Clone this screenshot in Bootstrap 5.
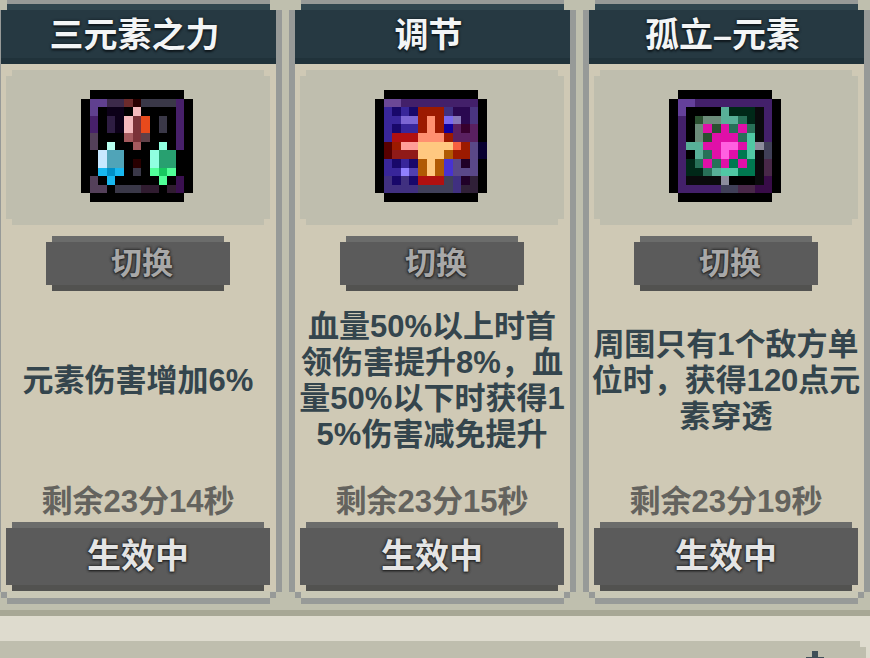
<!DOCTYPE html>
<html lang="zh-CN">
<head>
<meta charset="utf-8">
<meta name="viewport" content="width=device-width, initial-scale=1">
<title>元素</title>
<link href="https://cdn.jsdelivr.net/npm/bootstrap@5.3.0/dist/css/bootstrap.min.css" rel="stylesheet">
<style>
  :root { --notch: polygon(6px 0, calc(100% - 6px) 0, calc(100% - 6px) 6px, 100% 6px, 100% calc(100% - 6px), calc(100% - 6px) calc(100% - 6px), calc(100% - 6px) 100%, 6px 100%, 6px calc(100% - 6px), 0 calc(100% - 6px), 0 6px, 6px 6px); }
  body { background: #dedbce; color: #34454d; font-family: "Liberation Sans", "Noto Sans CJK SC", sans-serif; font-weight: 700; }
  .talents { background: #bfbfae; border-bottom: 6px solid #a7a795; padding-bottom: 6px; }
  .talent-grid { display: grid; grid-template-columns: repeat(3, minmax(0, 1fr)); gap: 7px; margin-left: -5px; }
  .talent { background: #979a98; padding: 4px 6px 6px;
    clip-path: polygon(12px 0, calc(100% - 12px) 0, calc(100% - 12px) 10px, 100% 10px, 100% calc(100% - 12px), calc(100% - 6px) calc(100% - 12px), calc(100% - 6px) calc(100% - 6px), calc(100% - 12px) calc(100% - 6px), calc(100% - 12px) 100%, 12px 100%, 12px calc(100% - 6px), 6px calc(100% - 6px), 6px calc(100% - 12px), 0 calc(100% - 12px), 0 10px, 12px 10px); }
  .talent-title { height: 60px; padding-right: 8px; font-size: 34px; line-height: 62px; color: #f3f5f6;
    background: linear-gradient(#31464f 6px, #263942 6px, #263942 54px, #20323a 54px);
    text-shadow: 0 0 3px #10191e, 0 2px 2px #10191e; }
  .talent-body { background: #cfc9b5; padding: 6px 6px 7px 5px; box-shadow: inset 0 -7px #c9c8b6;
    clip-path: polygon(0 0, 100% 0, 100% calc(100% - 6px), calc(100% - 6px) calc(100% - 6px), calc(100% - 6px) 100%, 6px 100%, 6px calc(100% - 6px), 0 calc(100% - 6px)); }
  .talent-art { height: 155px; padding: 0 2px 4px 0; background: #bfbeae; clip-path: var(--notch); }
  .talent-art svg { width: 112px; height: 112px; }
  .pixel-btn { border: 0; clip-path: var(--notch); font-weight: 700; text-shadow: 0 0 3px #252525, 0 0 3px #252525, 0 1px 2px #252525;
    background: linear-gradient(#6b6c6b 6px, #5b5b5b 6px, #5b5b5b calc(100% - 6px), #525250 calc(100% - 6px)); }
  .swap-btn { width: 184px; height: 55px; margin-top: 11px; padding: 0 0 0 8px; font-size: 31px; line-height: 55px; color: #a8a8a8; }
  .state-btn { height: 69px; padding: 0; margin-top: 2px; font-size: 34px; line-height: 69px; color: #e4e4e4; }
  .talent-text { height: 193px; padding-bottom: 14px; font-size: 31px; line-height: 36px; }
  .time-left { font-size: 31px; line-height: 36px; color: #64635e; }
  .next-panel { margin-top: 25px; margin-right: 4px; background: #bfbeae;
    clip-path: polygon(0 0, calc(100% - 6px) 0, calc(100% - 6px) 6px, 100% 6px, 100% 100%, 0 100%); }
  .next-panel svg { margin: 10px 42px 0 0; }
</style>
<script src="https://cdn.jsdelivr.net/npm/bootstrap@5.3.0/dist/js/bootstrap.bundle.min.js"></script>
</head>
<body class="d-flex flex-column min-vh-100 overflow-hidden">
<main class="talents">
  <div class="talent-grid">
    <article class="talent d-flex flex-column">
      <h2 class="talent-title text-center fw-bold mb-0">三元素之力</h2>
      <div class="talent-body d-flex flex-column flex-grow-1">
        <div class="talent-art d-flex align-items-center justify-content-center"><svg viewBox="0 0 13 13" data-icon="crystals" shape-rendering="crispEdges" aria-hidden="true"></svg></div>
        <button type="button" class="pixel-btn swap-btn align-self-center">切换</button>
        <p class="talent-text d-flex align-items-center justify-content-center text-center text-nowrap mb-0">元素伤害增加6%</p>
        <p class="time-left text-center text-nowrap mb-0">剩余23分14秒</p>
        <button type="button" class="pixel-btn state-btn w-100">生效中</button>
      </div>
    </article>
    <article class="talent d-flex flex-column">
      <h2 class="talent-title text-center fw-bold mb-0">调节</h2>
      <div class="talent-body d-flex flex-column flex-grow-1">
        <div class="talent-art d-flex align-items-center justify-content-center"><svg viewBox="0 0 13 13" data-icon="star" shape-rendering="crispEdges" aria-hidden="true"></svg></div>
        <button type="button" class="pixel-btn swap-btn align-self-center">切换</button>
        <p class="talent-text d-flex align-items-center justify-content-center text-center text-nowrap mb-0"><span>血量50%以上时首<br>领伤害提升8%，血<br>量50%以下时获得1<br>5%伤害减免提升</span></p>
        <p class="time-left text-center text-nowrap mb-0">剩余23分15秒</p>
        <button type="button" class="pixel-btn state-btn w-100">生效中</button>
      </div>
    </article>
    <article class="talent d-flex flex-column">
      <h2 class="talent-title text-center fw-bold mb-0">孤立–元素</h2>
      <div class="talent-body d-flex flex-column flex-grow-1">
        <div class="talent-art d-flex align-items-center justify-content-center"><svg viewBox="0 0 13 13" data-icon="target" shape-rendering="crispEdges" aria-hidden="true"></svg></div>
        <button type="button" class="pixel-btn swap-btn align-self-center">切换</button>
        <p class="talent-text d-flex align-items-center justify-content-center text-center text-nowrap mb-0"><span>周围只有1个敌方单<br>位时，获得120点元<br>素穿透</span></p>
        <p class="time-left text-center text-nowrap mb-0">剩余23分19秒</p>
        <button type="button" class="pixel-btn state-btn w-100">生效中</button>
      </div>
    </article>
  </div>
</main>
<section class="next-panel flex-grow-1 d-flex justify-content-end align-items-start overflow-hidden">
  <svg width="18" height="7" viewBox="0 0 18 7" shape-rendering="crispEdges" aria-hidden="true"><path fill="#3f4f58" d="M6 0h6v6h6v1H0V6h6z"/></svg>
</section>
<script>
  // Each icon is a 13 x 13 grid; "." is empty and "K" is black.
  const icons = {
    crystals: {
      colors: { P:'#60408f', p:'#3c2a4a', r:'#6b2b2b', d:'#280000', g:'#3a3848', U:'#47206a', e:'#0c0018', W:'#f4b9bc', m:'#7a3238', O:'#e84a1c', v:'#2e1d42', w:'#54405a', a:'#a55a5e', n:'#604048', c:'#b8fff0', M:'#90ffe0', L:'#c8e8ff', b:'#50a4b8', G:'#28a070', s:'#18b8f0', S:'#0090c8', N:'#50ff98', D:'#18c860', x:'#3a1050', y:'#301c30' },
      rows: ['.KKKKKKKKKKK.','KPPpprdggggUK','KPKeeKWKKKKUK','KUKveWmOKgKUK','KUKveWmOKgKUK','KwKKKamnKKKUK','KwKcKKaKKMKUK','KKLbbKKKMGGKK','KKLbbKdKMGGKK','KKsSsKgKNDNKK','KwKsKKKKKNKxK','KwwKgggyyKyxK','.KKKKKKKKKKK.']
    },
    star: {
      colors: { P:'#6b4896', U:'#43206a', B:'#38269a', n:'#18086a', R:'#9c1a00', v:'#4a3580', V:'#7c66d4', H:'#ff9070', l:'#7a68f0', q:'#8777b8', d:'#2a0850', b:'#10009a', m:'#5a2060', k:'#38002e', r:'#b01010', D:'#580000', W:'#ff9e98', Y:'#ffc880', O:'#f86040', z:'#080030', s:'#901a18', o:'#b05a04', L:'#4832d0', g:'#5a4888', x:'#200028', t:'#9080ff', u:'#5040b0', c:'#403080', y:'#40405a', e:'#302038' },
      rows: ['.KKKKKKKKKKK.','KPPUUUUUUUUUK','KBnBnRRRcddvK','KBBVVRHRlqdvK','KBnBBRHRbmkmK','KBrrrHHHRmmmK','KDRWWYYYYORgz','KDsssYYYoRRgz','KBnBnoYoLgxgK','KBBtuoYoLgggK','KcncnrrrycxeK','KccccyyyyceeK','.KKKKKKKKKKK.']
    },
    target: {
      colors: { P:'#64409a', U:'#43206a', T:'#58b098', d:'#002818', f:'#2a5030', s:'#6c8c7a', h:'#287058', M:'#e010a8', L:'#50c8a4', W:'#ff60e0', G:'#8c8c9c', g:'#404058', E:'#007850', m:'#482848', x:'#380c48', k:'#0a0a0c' },
      rows: ['.KKKKKKKKKKK.','KPPUUUUUUUUUK','KPKKKKTdddkUK','KUKfssTThdkUK','KUKsMfMhMhkUK','KUKsfMMMhLkUK','KUTTMMWWMLGgK','KUKThMWMELkgK','KUdhMhMEMEkmK','KUddhTLLEEkmK','KUkkkkGKKKkxK','KUUUUUggmmxxK','.KKKKKKKKKKK.']
    }
  };
  document.querySelectorAll('svg[data-icon]').forEach(svg => {
    const { colors, rows } = icons[svg.dataset.icon];
    rows.forEach((row, y) => [...row].forEach((key, x) => {
      if (key === '.') return;
      const cell = document.createElementNS('http://www.w3.org/2000/svg', 'rect');
      cell.setAttribute('x', x);
      cell.setAttribute('y', y);
      cell.setAttribute('width', 1);
      cell.setAttribute('height', 1);
      cell.setAttribute('fill', colors[key] || '#000');
      svg.append(cell);
    }));
  });
</script>
</body>
</html>
